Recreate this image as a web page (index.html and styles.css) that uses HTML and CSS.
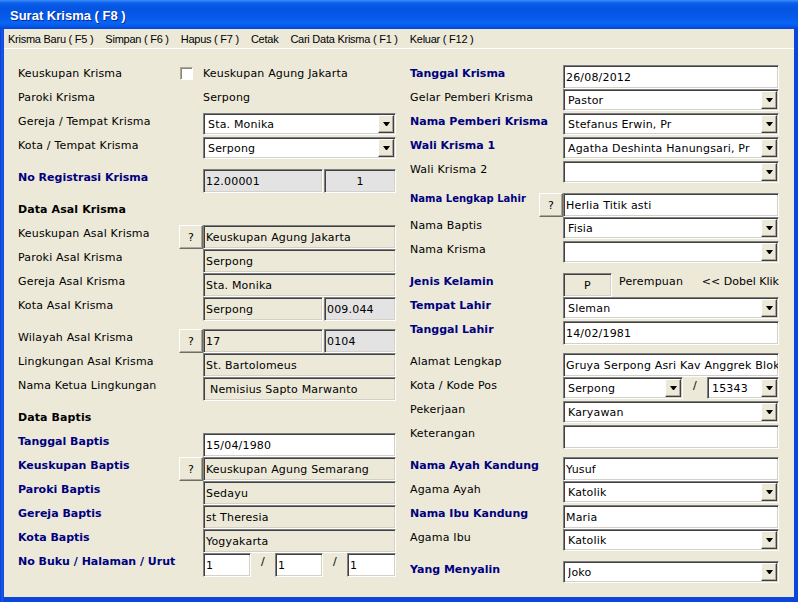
FILE: index.html
```html
<!DOCTYPE html>
<html>
<head>
<meta charset="utf-8">
<title>Surat Krisma</title>
<link rel="stylesheet" href="styles.css">
</head>
<body>
<div class="window">
  <div class="titlebar"><span class="title">Surat Krisma ( F8 )</span></div>
  <div class="frame">
    <div class="client">
      <nav class="menubar">
        <span>Krisma Baru ( F5 )</span>
        <span>Simpan ( F6 )</span>
        <span>Hapus ( F7 )</span>
        <span>Cetak</span>
        <span>Cari Data Krisma ( F1 )</span>
        <span>Keluar ( F12 )</span>
      </nav>
      <div class="form">
        <div class="col left">
          <div class="row"><span class="lbl">Keuskupan Krisma</span><span class="check"></span><span class="txt">Keuskupan Agung Jakarta</span></div>
          <div class="row"><span class="lbl">Paroki Krisma</span><span class="txt">Serpong</span></div>
          <div class="row"><span class="lbl">Gereja / Tempat Krisma</span><div class="fld combo"><span class="val">Sta. Monika</span><span class="dd"></span></div></div>
          <div class="row"><span class="lbl">Kota / Tempat Krisma</span><div class="fld combo"><span class="val">Serpong</span><span class="dd"></span></div></div>

          <div class="row gap"><span class="lbl blue">No Registrasi Krisma</span>
            <div class="fld split"><span class="box ro gray w120">12.00001</span><span class="box ro gray grow center">1</span></div></div>

          <div class="row gap"><span class="lbl head">Data Asal Krisma</span></div>
          <div class="row"><span class="lbl">Keuskupan Asal Krisma</span><span class="qbtn">?</span><span class="fld box ro">Keuskupan Agung Jakarta</span></div>
          <div class="row"><span class="lbl">Paroki Asal Krisma</span><span class="fld box ro">Serpong</span></div>
          <div class="row"><span class="lbl">Gereja Asal Krisma</span><span class="fld box ro">Sta. Monika</span></div>
          <div class="row"><span class="lbl">Kota Asal Krisma</span>
            <div class="fld split"><span class="box ro w120">Serpong</span><span class="box ro gray grow">009.044</span></div></div>

          <div class="row gap"><span class="lbl">Wilayah Asal Krisma</span><span class="qbtn">?</span>
            <div class="fld split"><span class="box ro w120">17</span><span class="box ro gray grow">0104</span></div></div>
          <div class="row"><span class="lbl">Lingkungan Asal Krisma</span><span class="fld box ro">St. Bartolomeus</span></div>
          <div class="row"><span class="lbl">Nama Ketua Lingkungan</span><span class="fld box ro indent">Nemisius Sapto Marwanto</span></div>

          <div class="row gap"><span class="lbl head">Data Baptis</span></div>
          <div class="row"><span class="lbl blue">Tanggal Baptis</span><span class="fld box edit">15/04/1980</span></div>
          <div class="row"><span class="lbl blue">Keuskupan Baptis</span><span class="qbtn">?</span><span class="fld box ro">Keuskupan Agung Semarang</span></div>
          <div class="row"><span class="lbl blue">Paroki Baptis</span><span class="fld box ro">Sedayu</span></div>
          <div class="row"><span class="lbl blue">Gereja Baptis</span><span class="fld box ro">st Theresia</span></div>
          <div class="row"><span class="lbl blue">Kota Baptis</span><span class="fld box ro">Yogyakarta</span></div>
          <div class="row"><span class="lbl blue">No Buku / Halaman / Urut</span>
            <div class="fld split nogap"><span class="box edit w48">1</span><span class="slash">/</span><span class="box edit w48">1</span><span class="slash">/</span><span class="box edit grow">1</span></div></div>
        </div>

        <div class="col right">
          <div class="row"><span class="lbl blue">Tanggal Krisma</span><span class="fld box edit">26/08/2012</span></div>
          <div class="row"><span class="lbl">Gelar Pemberi Krisma</span><div class="fld combo"><span class="val">Pastor</span><span class="dd"></span></div></div>
          <div class="row"><span class="lbl blue">Nama Pemberi Krisma</span><div class="fld combo"><span class="val">Stefanus Erwin, Pr</span><span class="dd"></span></div></div>
          <div class="row"><span class="lbl blue">Wali Krisma 1</span><div class="fld combo"><span class="val">Agatha Deshinta Hanungsari, Pr</span><span class="dd"></span></div></div>
          <div class="row"><span class="lbl">Wali Krisma 2</span><div class="fld combo"><span class="val"></span><span class="dd"></span></div></div>

          <div class="row gap"><span class="lbl blue small">Nama Lengkap Lahir</span><span class="qbtn">?</span><span class="fld box edit">Herlia Titik asti</span></div>
          <div class="row"><span class="lbl">Nama Baptis</span><div class="fld combo"><span class="val">Fisia</span><span class="dd"></span></div></div>
          <div class="row"><span class="lbl">Nama Krisma</span><div class="fld combo"><span class="val"></span><span class="dd"></span></div></div>

          <div class="row gap"><span class="lbl blue">Jenis Kelamin</span>
            <div class="fld sex"><span class="box ro center w49">P</span><span class="note">Perempuan</span><span class="note hint">&lt;&lt; Dobel Klik</span></div></div>
          <div class="row"><span class="lbl blue">Tempat Lahir</span><div class="fld combo"><span class="val">Sleman</span><span class="dd"></span></div></div>
          <div class="row"><span class="lbl blue">Tanggal Lahir</span><span class="fld box edit">14/02/1981</span></div>

          <div class="row gap"><span class="lbl">Alamat Lengkap</span><span class="fld box edit">Gruya Serpong Asri Kav Anggrek Blok</span></div>
          <div class="row"><span class="lbl">Kota / Kode Pos</span>
            <div class="fld split nogap"><div class="combo w120"><span class="val">Serpong</span><span class="dd"></span></div><span class="slash">/</span><div class="combo grow"><span class="val">15343</span><span class="dd"></span></div></div></div>
          <div class="row"><span class="lbl">Pekerjaan</span><div class="fld combo"><span class="val">Karyawan</span><span class="dd"></span></div></div>
          <div class="row"><span class="lbl">Keterangan</span><span class="fld box edit"></span></div>

          <div class="row gap"><span class="lbl blue">Nama Ayah Kandung</span><span class="fld box edit">Yusuf</span></div>
          <div class="row"><span class="lbl">Agama Ayah</span><div class="fld combo"><span class="val">Katolik</span><span class="dd"></span></div></div>
          <div class="row"><span class="lbl blue">Nama Ibu Kandung</span><span class="fld box edit">Maria</span></div>
          <div class="row"><span class="lbl">Agama Ibu</span><div class="fld combo"><span class="val">Katolik</span><span class="dd"></span></div></div>

          <div class="row gap"><span class="lbl blue">Yang Menyalin</span><div class="fld combo"><span class="val">Joko</span><span class="dd"></span></div></div>
        </div>
      </div>
    </div>
  </div>
</div>
</body>
</html>
```

FILE: styles.css
```css
html, body {
  margin: 0;
  padding: 0;
}
body {
  width: 798px;
  height: 602px;
  overflow: hidden;
  font-family: "DejaVu Sans", Verdana, sans-serif;
  font-size: 11px;
  letter-spacing: 0.18px;
  color: #000;
}
.window {
  width: 798px;
  height: 602px;
  display: flex;
  flex-direction: column;
  background: #0a46dc;
}
.titlebar {
  flex: none;
  height: 29px;
  box-sizing: border-box;
  padding: 2px 0 0 10px;
  display: flex;
  align-items: center;
  background: linear-gradient(to bottom, #3d8ffa 0px, #0b5fea 3px, #0554e2 8px, #0558e8 16px, #0a64f4 23px, #0559ea 26px, #0345d6 29px);
}
.title {
  font-family: "Liberation Sans", Arial, sans-serif;
  font-weight: bold;
  font-size: 13px;
  letter-spacing: 0;
  color: #fff;
  text-shadow: 1px 1px 0 #0a2a9a;
}
.frame {
  flex: 1;
  display: flex;
  padding: 0 4px 5px 4px;
  background: linear-gradient(to right, #0a3fd0 0, #1a5ae8 2px, #0a46dc 4px);
}
.client {
  flex: 1;
  background: #ece9d8;
}
.menubar {
  height: 19px;
  border-bottom: 1px solid #fff;
  display: flex;
  align-items: center;
  gap: 12px;
  padding-left: 4px;
  font-family: "Liberation Sans", Arial, sans-serif;
  font-size: 11px;
  letter-spacing: -0.25px;
}
.form {
  display: flex;
  gap: 14px;
  padding: 16px 0 0 14px;
}
.col {
  display: flex;
  flex-direction: column;
}
.left { --lw: 161px; --fw: 193px; }
.right { --lw: 129px; --fw: 216px; }
.row {
  display: grid;
  grid-template-columns: var(--lw) 24px var(--fw);
  height: 24px;
}
.row.gap { margin-top: 8px; }
.lbl {
  grid-column: 1;
  padding-top: 2px;
  line-height: 13px;
  white-space: nowrap;
}
.lbl.blue {
  color: #000080;
  font-weight: bold;
  letter-spacing: 0;
}
.lbl.small {
  font-size: 10px;
  line-height: 12px;
  padding-top: 0;
}
.lbl.head {
  font-weight: bold;
  letter-spacing: 0.1px;
}
.txt {
  grid-column: 3;
  padding-top: 2px;
  line-height: 13px;
  white-space: nowrap;
}
.fld { grid-column: 3; }

.check {
  grid-column: 2;
  width: 13px;
  height: 13px;
  box-sizing: border-box;
  margin: 2px 0 0 1px;
  background: #fff;
  border: 1px solid;
  border-color: #aca899 #fff #fff #aca899;
  box-shadow: inset 1px 1px #8a877a;
}

.box, .combo {
  box-sizing: border-box;
  border: 1px solid;
  border-color: #808080 #fff #fff #808080;
  box-shadow: inset 1px 1px #404040, inset -1px -1px #d4d0c8;
  display: flex;
  align-items: center;
  white-space: nowrap;
  overflow: hidden;
}
.box {
  height: 24px;
  padding: 0 0 0 2px;
}
.edit { background: #fff; }
.ro { background: #ece9d8; }
.ro.gray { background: #e3e3e3; }
.indent { padding-left: 6px; }
.center { justify-content: center; padding-left: 0; }
.combo {
  height: 22px;
  padding: 1px 1px 1px 4px;
  background: #fff;
}
.combo .val {
  flex: 1;
  overflow: hidden;
}
.dd {
  flex: none;
  width: 16px;
  align-self: stretch;
  box-sizing: border-box;
  background: #ece9d8;
  border: 1px solid;
  border-color: #fff #404040 #404040 #fff;
  box-shadow: inset -1px -1px #aca899;
  display: flex;
  align-items: center;
  justify-content: center;
}
.dd::after {
  content: "";
  width: 1px;
  height: 0;
  border-top: 4px solid #000;
  border-left: 3px solid transparent;
  border-right: 3px solid transparent;
}
.qbtn {
  grid-column: 2;
  box-sizing: border-box;
  height: 24px;
  background: #ece9d8;
  border: 1px solid;
  border-color: #fff #716f64 #716f64 #fff;
  box-shadow: inset -1px -1px #aca899;
  display: flex;
  align-items: center;
  justify-content: center;
  font-size: 11px;
}
.split {
  display: flex;
  gap: 1px;
}
.split.nogap { gap: 0; }
.w120 { width: 120px; flex: none; }
.w48 { width: 48px; flex: none; }
.w49 { width: 49px; flex: none; }
.grow { flex: 1; min-width: 0; }
.slash {
  width: 24px;
  flex: none;
  text-align: center;
  padding-top: 2px;
  line-height: 13px;
}
.sex {
  display: flex;
}
.note {
  padding-top: 2px;
  line-height: 13px;
  margin-left: 7px;
  white-space: nowrap;
}
.note.hint {
  margin-left: auto;
  letter-spacing: 0;
}
```
